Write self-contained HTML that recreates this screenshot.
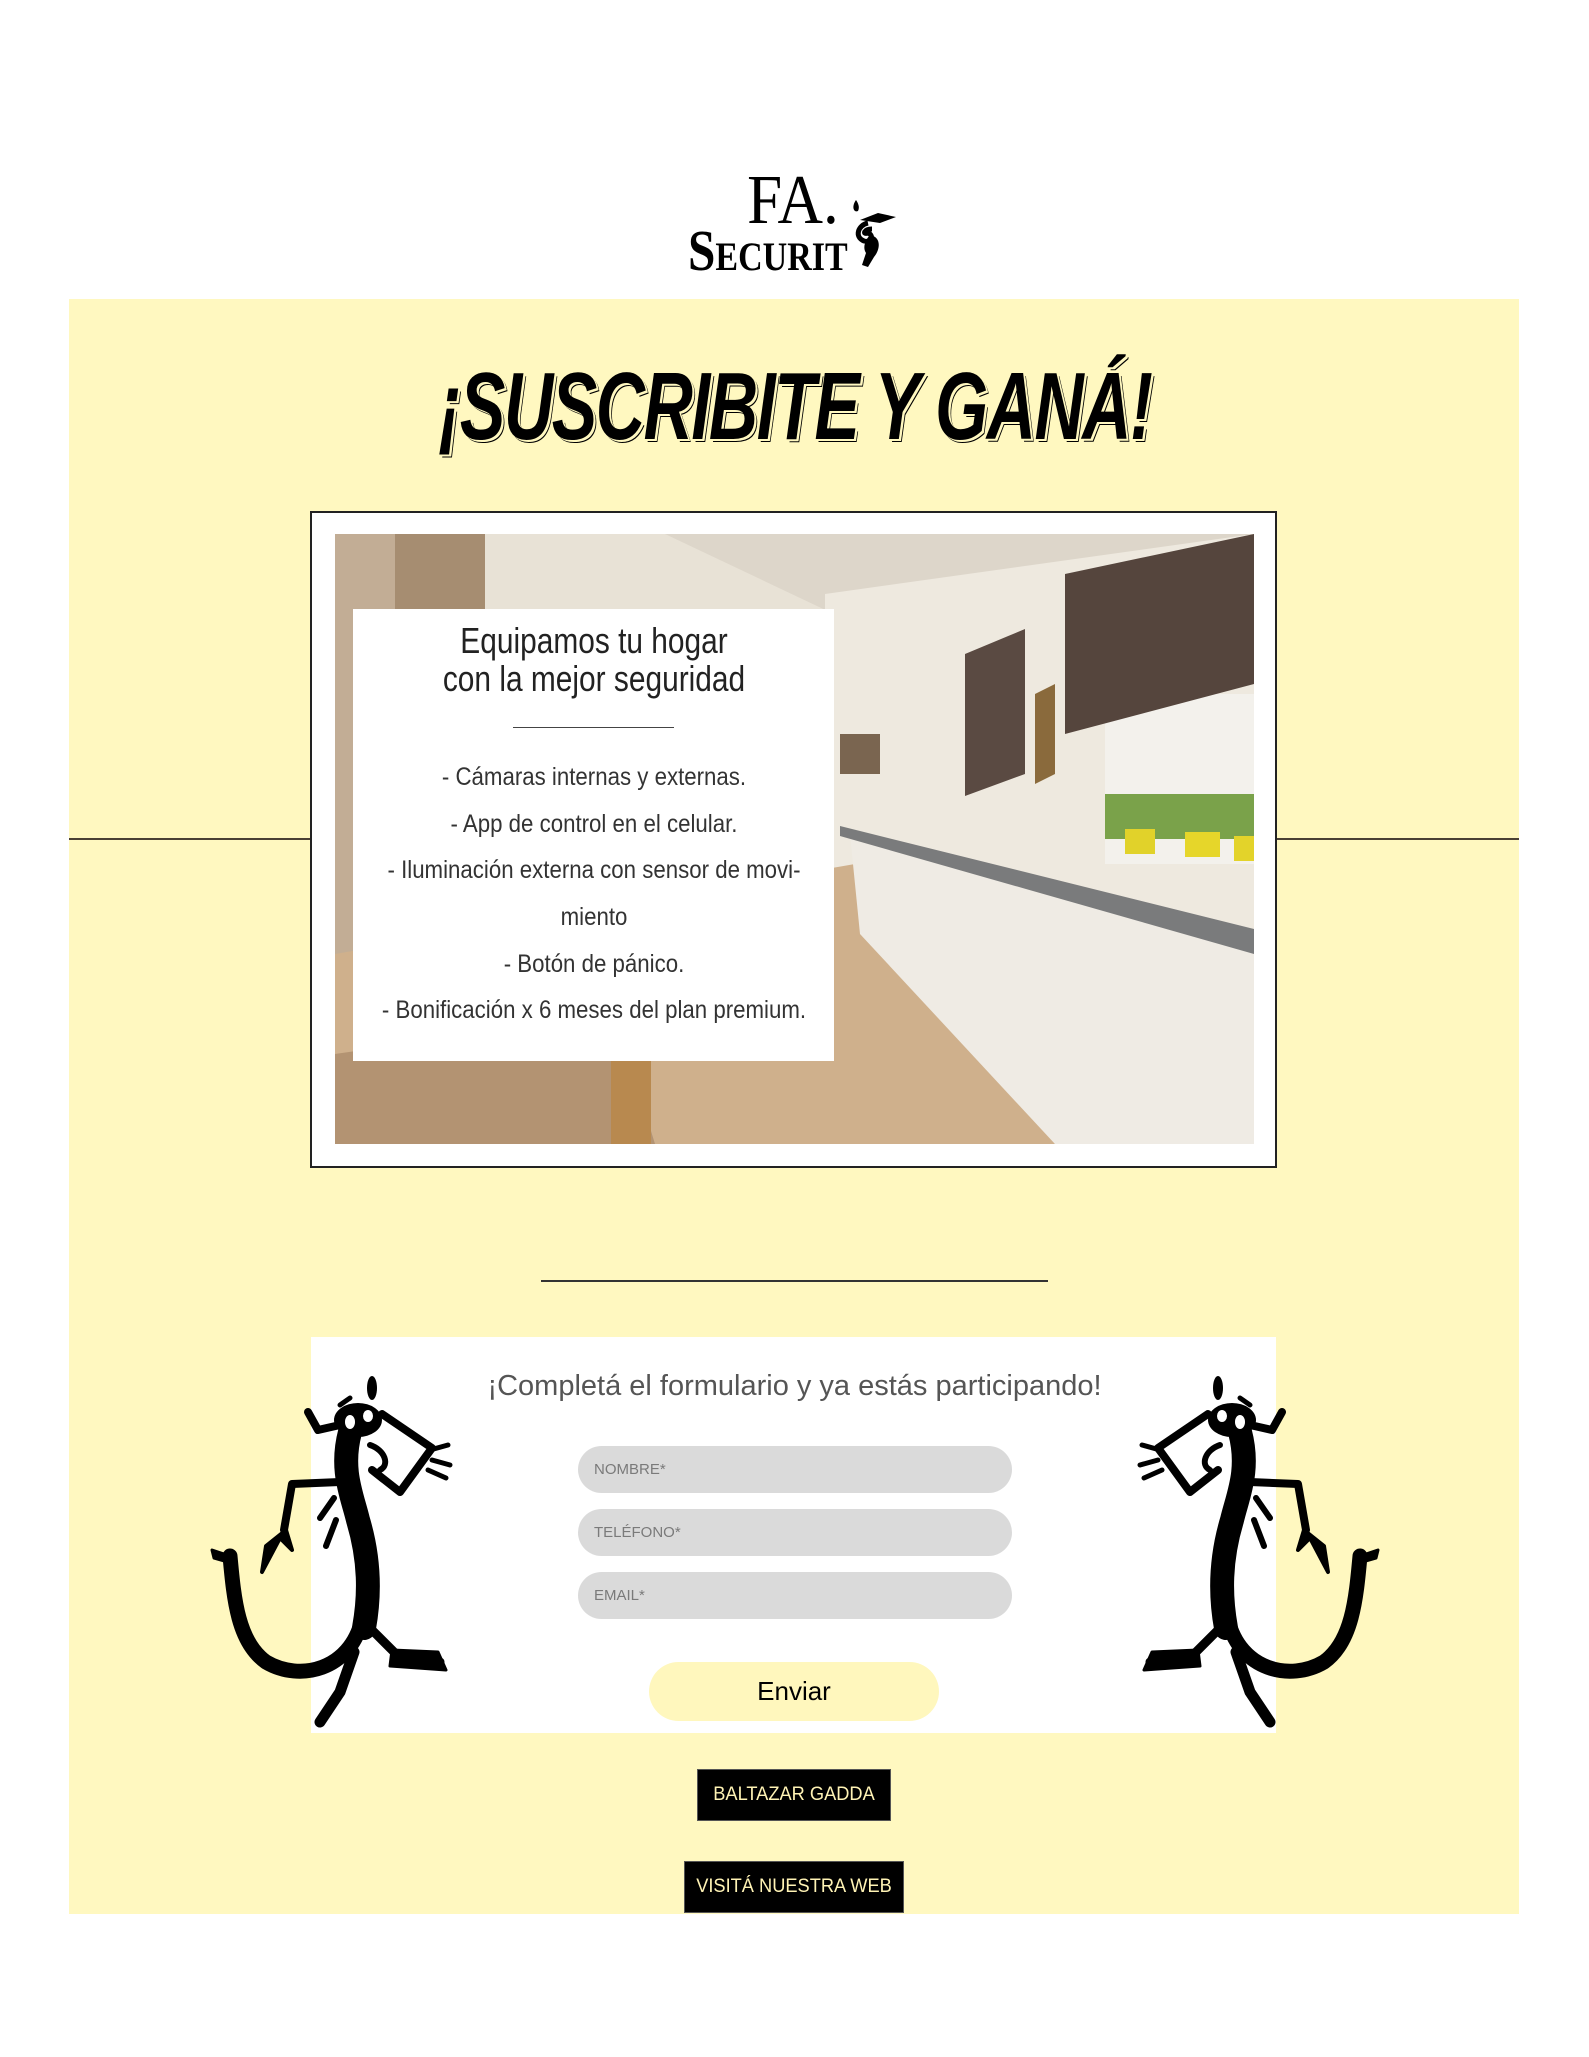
<!DOCTYPE html>
<html><head><meta charset="utf-8">
<style>
*{margin:0;padding:0;box-sizing:border-box}
body{width:1589px;height:2057px;background:#fff;position:relative;font-family:"Liberation Sans",sans-serif;overflow:hidden}
.abs{position:absolute}
.yellow{left:69px;top:299px;width:1450px;height:1615px;background:#fff8c0}
.hl{height:2px;background:#4a4034}
.c{position:absolute;left:50%;white-space:nowrap;transform-origin:center}
.inp{left:578px;width:434px;height:47px;border-radius:24px;background:#dadada;color:#7a7a7a;font-size:15px;padding-left:16px;line-height:47px}
.btn{background:#000;color:#fff3b5;font-size:19px;border:1px solid #555}
.row{position:relative;height:46.7px}
.row span{position:absolute;left:50%;top:0;white-space:nowrap;transform:translateX(-50%) scaleX(0.89);line-height:46.7px}
</style></head><body>

<!-- logo -->
<div class="abs" style="left:742px;top:166px;font-family:'Liberation Serif',serif;font-size:70px;line-height:70px;color:#000"><span style="display:inline-block;transform:scaleX(0.9)">FA.</span></div>
<div class="abs" style="left:688px;top:222px;font-family:'Liberation Serif',serif;font-size:58px;line-height:58px;color:#000;font-weight:bold"><span style="display:inline-block;transform:scaleX(0.85);transform-origin:left">S<span style="font-size:40px">ECURIT</span></span></div>
<svg class="abs" style="left:848px;top:195px" width="52" height="75" viewBox="0 0 52 75">
<path d="M8 5 C3 12 6 18 10 16 C12 12 10 8 8 5Z" fill="#000"/>
<path d="M12 25 L30 18 L48 22 L32 28 Z" fill="#000"/>
<path d="M20 28 C10 30 6 42 16 46 C24 48 26 40 20 38 C14 40 16 34 24 34" stroke="#000" stroke-width="5" fill="none"/>
<path d="M22 40 C34 42 32 55 26 62 L20 72 L14 70 L18 58 C14 52 18 44 22 40Z" fill="#000"/>
</svg>

<div class="abs yellow"></div>

<!-- title -->
<div class="c" style="top:352px;font-size:96px;line-height:110px;font-weight:bold;font-style:italic;color:#000;letter-spacing:-2px;text-shadow:3px 2px 0 #fff8c0,4px 3px 0 #000;transform:translateX(-50%) scaleX(0.71)">¡SUSCRIBITE Y GANÁ!</div>

<!-- horizontal lines -->
<div class="abs hl" style="left:69px;top:838px;width:242px"></div>
<div class="abs hl" style="left:1276px;top:838px;width:243px"></div>

<!-- frame -->
<div class="abs" style="left:310px;top:511px;width:967px;height:657px;border:2px solid #222;background:#fff"></div>
<svg class="abs" style="left:335px;top:534px" width="919" height="610" viewBox="0 0 919 610">
<rect width="919" height="610" fill="#ddd6ca"/>
<polygon points="0,0 60,0 60,610 0,610" fill="#c2ad95"/>
<rect x="60" y="0" width="90" height="80" fill="#a68d71"/>
<polygon points="150,0 330,0 520,90 520,340 150,380" fill="#e8e2d6"/>
<polygon points="490,60 919,0 919,610 490,610" fill="#eee9df"/>
<polygon points="0,420 520,330 720,610 0,610" fill="#cfb08c"/>
<polygon points="0,520 280,480 320,610 0,610" fill="#b39372"/>
<rect x="276" y="520" width="40" height="90" fill="#b8894f"/>
<polygon points="515,300 919,410 919,610 720,610 525,400" fill="#efebe4"/>
<polygon points="505,292 919,395 919,420 505,302" fill="#7a7b7c"/>
<polygon points="630,120 690,95 690,240 630,262" fill="#5a4a42"/>
<polygon points="700,160 720,150 720,240 700,250" fill="#8a6a3c"/>
<rect x="770" y="160" width="149" height="170" fill="#f3f1ec"/>
<polygon points="730,40 919,0 919,150 730,200" fill="#55453d"/>
<rect x="770" y="260" width="149" height="45" fill="#7aa24a"/>
<rect x="790" y="295" width="30" height="25" fill="#e1d22a"/>
<rect x="850" y="298" width="35" height="25" fill="#e6d62a"/>
<rect x="899" y="302" width="20" height="25" fill="#e3d32a"/>
<rect x="505" y="200" width="40" height="40" fill="#7a6550"/>
</svg>
<div class="abs" style="left:353px;top:609px;width:481px;height:452px;background:#fff"></div>
<div class="abs" style="left:353px;top:622px;width:481px;height:80px;color:#222;font-size:36px;line-height:38px">
<div class="c" style="top:0;transform:translateX(-50%) scaleX(0.83)">Equipamos tu hogar</div>
<div class="c" style="top:38px;transform:translateX(-50%) scaleX(0.83)">con la mejor seguridad</div></div>
<div class="abs" style="left:513px;top:727px;width:161px;height:1px;background:#444"></div>
<div class="abs" style="left:353px;top:754px;width:481px;color:#333;font-size:25px">
<div class="row"><span>-  Cámaras internas y externas.</span></div>
<div class="row"><span>-  App de control en el celular.</span></div>
<div class="row"><span>-  Iluminación externa con sensor de movi-</span></div>
<div class="row"><span>miento</span></div>
<div class="row"><span>- Botón de pánico.</span></div>
<div class="row"><span>- Bonificación x 6 meses del plan premium.</span></div></div>

<!-- divider -->
<div class="abs" style="left:541px;top:1280px;width:507px;height:2px;background:#333"></div>

<!-- form -->
<div class="abs" style="left:311px;top:1337px;width:965px;height:396px;background:#fff"></div>
<div class="c" style="top:1366px;color:#555;font-size:29px;line-height:40px;transform:translateX(-50%)">¡Completá el formulario y ya estás participando!</div>
<div class="abs inp" style="top:1446px">NOMBRE*</div>
<div class="abs inp" style="top:1509px">TELÉFONO*</div>
<div class="abs inp" style="top:1572px">EMAIL*</div>
<div class="abs" style="left:649px;top:1662px;width:290px;height:59px;border-radius:30px;background:#fff7bd;text-align:center;line-height:59px;font-size:26px;color:#000">Enviar</div>

<!-- lizards -->
<svg class="abs" style="left:200px;top:1370px" width="260" height="360" viewBox="0 0 260 360">
<g fill="#000" stroke="#000" stroke-linecap="round" stroke-linejoin="round">
<ellipse cx="172" cy="18" rx="5" ry="12" stroke="none"/>
<ellipse cx="158" cy="50" rx="24" ry="17" stroke="none"/>
<path d="M108 42 L118 60 L140 55" stroke-width="8" fill="none"/>
<path d="M140 35 L150 28" stroke-width="5"/>
<path d="M182 44 L232 78 L200 122 L172 100" stroke-width="8" fill="none"/>
<path d="M230 80 L248 75 M232 90 L250 95 M228 100 L246 108" stroke-width="5"/>
<path d="M170 75 C185 80 190 95 180 100" stroke-width="6" fill="none"/>
<path d="M150 62 C140 100 152 125 158 150 C170 190 170 225 164 258" stroke-width="24" fill="none"/>
<path d="M162 250 C150 300 100 312 66 292 C38 272 34 230 30 186" stroke-width="15" fill="none"/>
<path d="M30 186 L12 180 L14 188 L28 192Z" stroke-width="3"/>
<path d="M140 112 L92 114 L84 160" stroke-width="8" fill="none"/>
<path d="M62 202 L66 176 L86 160 L92 180 L80 168 Z" stroke-width="4"/>
<path d="M170 258 L198 286 L240 292" stroke-width="9" fill="none"/>
<path d="M192 280 L238 282 L246 300 L190 296Z" stroke-width="3"/>
<path d="M154 282 L140 322 L120 352" stroke-width="11" fill="none"/>
<path d="M134 128 L120 148 M136 150 L126 176" stroke-width="6"/>
</g>
<g fill="#fff"><ellipse cx="150" cy="52" rx="5" ry="7"/><ellipse cx="168" cy="46" rx="5" ry="6"/></g>
</svg>
<svg class="abs" style="left:1130px;top:1370px;transform:scaleX(-1)" width="260" height="360" viewBox="0 0 260 360">
<g fill="#000" stroke="#000" stroke-linecap="round" stroke-linejoin="round">
<ellipse cx="172" cy="18" rx="5" ry="12" stroke="none"/>
<ellipse cx="158" cy="50" rx="24" ry="17" stroke="none"/>
<path d="M108 42 L118 60 L140 55" stroke-width="8" fill="none"/>
<path d="M140 35 L150 28" stroke-width="5"/>
<path d="M182 44 L232 78 L200 122 L172 100" stroke-width="8" fill="none"/>
<path d="M230 80 L248 75 M232 90 L250 95 M228 100 L246 108" stroke-width="5"/>
<path d="M170 75 C185 80 190 95 180 100" stroke-width="6" fill="none"/>
<path d="M150 62 C140 100 152 125 158 150 C170 190 170 225 164 258" stroke-width="24" fill="none"/>
<path d="M162 250 C150 300 100 312 66 292 C38 272 34 230 30 186" stroke-width="15" fill="none"/>
<path d="M30 186 L12 180 L14 188 L28 192Z" stroke-width="3"/>
<path d="M140 112 L92 114 L84 160" stroke-width="8" fill="none"/>
<path d="M62 202 L66 176 L86 160 L92 180 L80 168 Z" stroke-width="4"/>
<path d="M170 258 L198 286 L240 292" stroke-width="9" fill="none"/>
<path d="M192 280 L238 282 L246 300 L190 296Z" stroke-width="3"/>
<path d="M154 282 L140 322 L120 352" stroke-width="11" fill="none"/>
<path d="M134 128 L120 148 M136 150 L126 176" stroke-width="6"/>
</g>
<g fill="#fff"><ellipse cx="150" cy="52" rx="5" ry="7"/><ellipse cx="168" cy="46" rx="5" ry="6"/></g>
</svg>

<!-- buttons -->
<div class="abs btn" style="left:697px;top:1769px;width:194px;height:52px"><div class="c" style="top:0;line-height:50px;transform:translateX(-50%) scaleX(0.96)">BALTAZAR GADDA</div></div>
<div class="abs btn" style="left:684px;top:1861px;width:220px;height:52px"><div class="c" style="top:0;line-height:50px;transform:translateX(-50%) scaleX(0.96)">VISITÁ NUESTRA WEB</div></div>

</body></html>
